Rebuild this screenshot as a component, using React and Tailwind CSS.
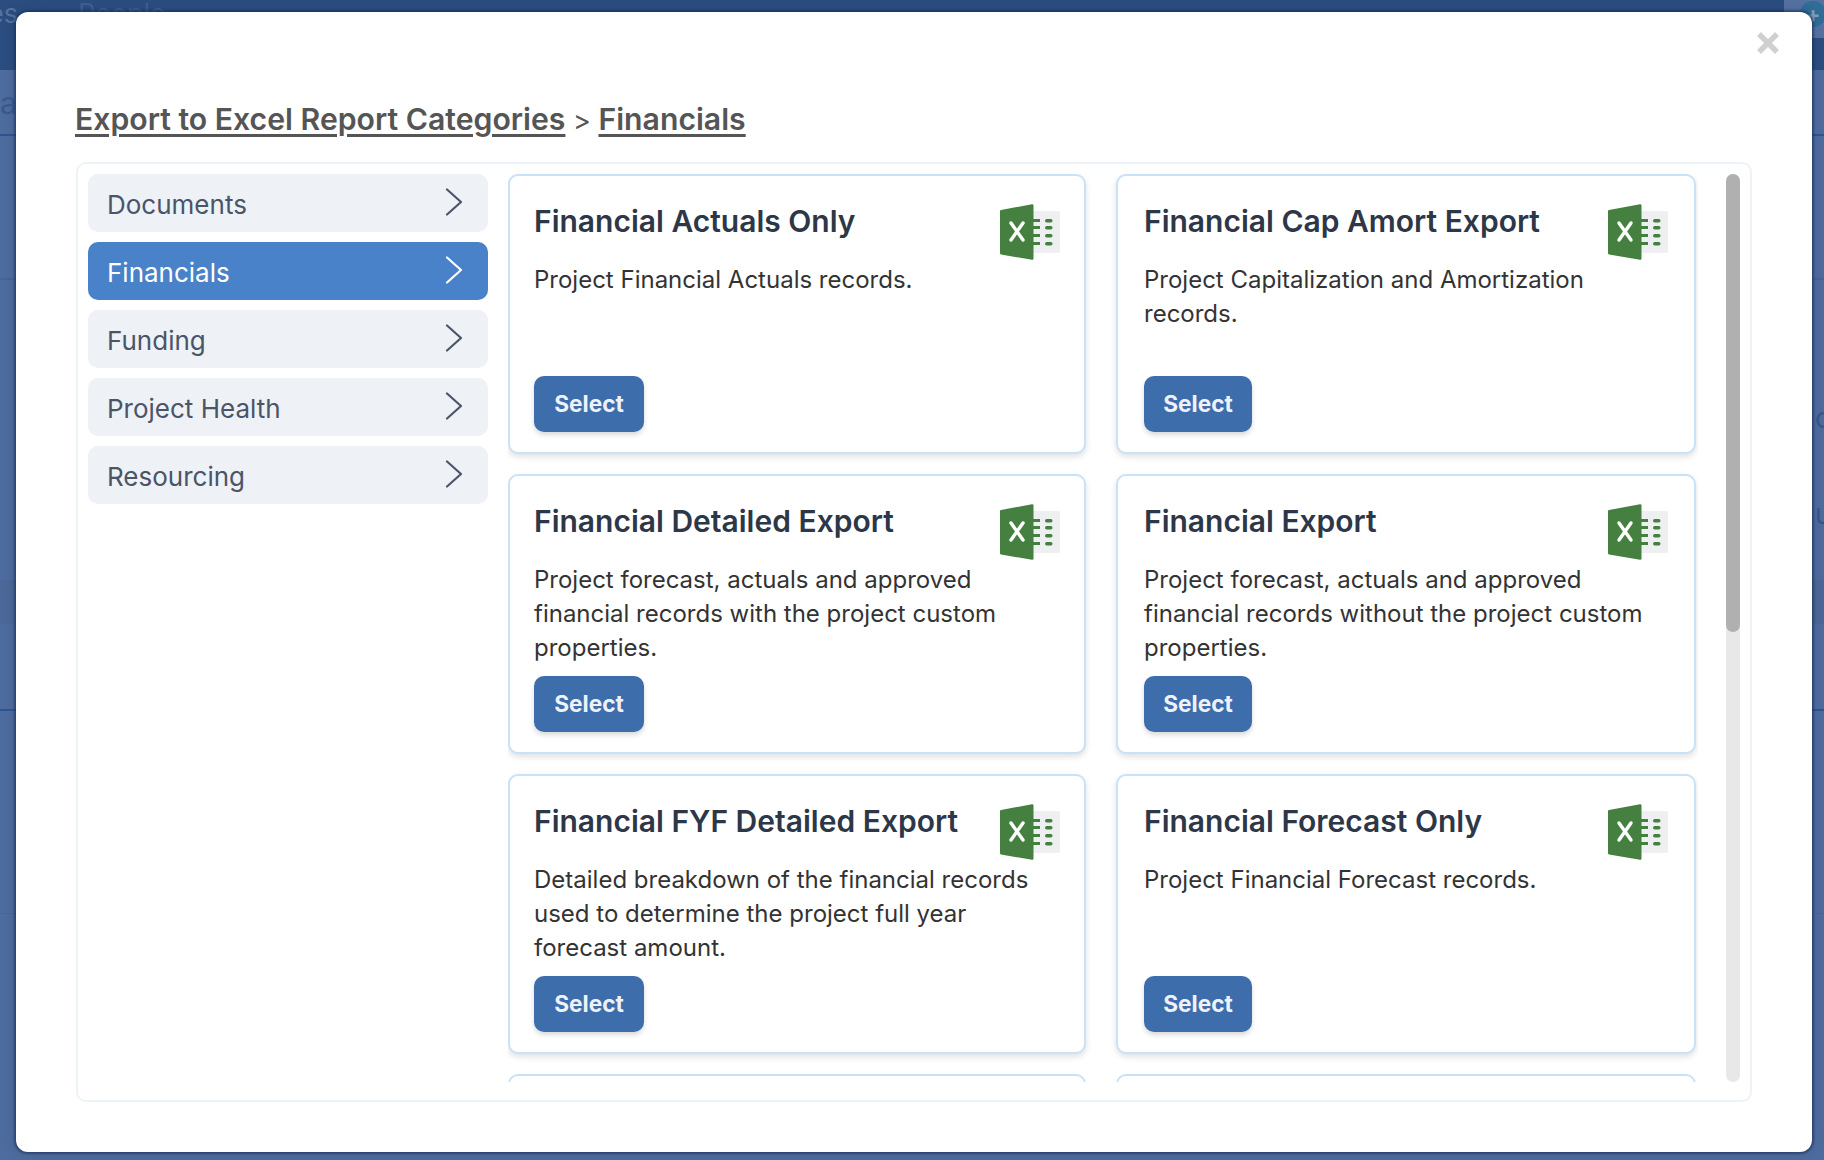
const navItems = ["Documents", "Financials", "Funding", "Project Health", "Resourcing"];

const cards = [
  { title: "Financial Actuals Only", lines: ["Project Financial Actuals records."] },
  { title: "Financial Cap Amort Export", lines: ["Project Capitalization and Amortization", "records."] },
  { title: "Financial Detailed Export", lines: ["Project forecast, actuals and approved", "financial records with the project custom", "properties."] },
  { title: "Financial Export", lines: ["Project forecast, actuals and approved", "financial records without the project custom", "properties."] },
  { title: "Financial FYF Detailed Export", lines: ["Detailed breakdown of the financial records", "used to determine the project full year", "forecast amount."] },
  { title: "Financial Forecast Only", lines: ["Project Financial Forecast records."] },
];

function ExcelIcon() {
  return (
    <svg width="60" height="56" viewBox="0 0 60 56" className="shrink-0">
      <rect x="30" y="7" width="30" height="42" rx="2" fill="#eeeff0" />
      <g fill="#458040">
        <rect x="33" y="15" width="7" height="3" />
        <rect x="33" y="22" width="7" height="3" />
        <rect x="33" y="30" width="7" height="3" />
        <rect x="33" y="38" width="7" height="3" />
        <rect x="45" y="15" width="7.5" height="3.4" rx="1.7" />
        <rect x="45" y="22" width="7.5" height="3.4" rx="1.7" />
        <rect x="45" y="30" width="7.5" height="3.4" rx="1.7" />
        <rect x="45" y="38" width="7.5" height="3.4" rx="1.7" />
      </g>
      <path d="M1 6 L32 0.2 Q33.5 0 33.5 1.5 L33.5 54.5 Q33.5 56 32 55.8 L1 50.5 Q0 50.3 0 49.3 L0 7 Q0 6.2 1 6 Z" fill="#458040" />
      <path d="M11 19 L23 36 M23 19 L11 36" stroke="#ffffff" strokeWidth="3.4" strokeLinecap="round" />
    </svg>
  );
}

function Chevron({ className }) {
  return (
    <svg width="18" height="28" viewBox="0 0 18 28" fill="none" className={className}>
      <path d="M2 1.5 L16 14 L2 26.5" stroke="currentColor" strokeWidth="2.2" strokeLinecap="round" strokeLinejoin="round" />
    </svg>
  );
}

function Card({ title, lines, right }) {
  return (
    <div
      className={
        right
          ? "h-[280px] rounded-[10px] border-2 border-[#c8e2f8] bg-white pl-[26px] pr-[26px] pt-[26px] pb-[20px] shadow-[0_3px_6px_rgba(0,0,0,0.12)] flex flex-col"
          : "h-[280px] rounded-[10px] border-2 border-[#c8e2f8] bg-white pl-[24px] pr-[24px] pt-[26px] pb-[20px] shadow-[0_3px_6px_rgba(0,0,0,0.12)] flex flex-col"
      }
    >
      <div className="flex justify-between items-start">
        <div className="min-w-0">
          <div className="text-[30px] leading-[38px] font-semibold text-[#2d3748] whitespace-nowrap">{title}</div>
          <div className="mt-[23px] text-[24px] leading-[34px] text-[#333333]">
            {lines.map((l) => (
              <div key={l} className="whitespace-nowrap">{l}</div>
            ))}
          </div>
        </div>
        <div className="pt-[2px]">
          <ExcelIcon />
        </div>
      </div>
      <button
        className={
          right
            ? "mt-auto w-[108px] h-[56px] rounded-[10px] bg-[#3d6dab] text-[#eef2f8] text-[22.7px] font-bold shadow-[0_3px_5px_rgba(0,0,0,0.15)]"
            : "mt-auto w-[110px] h-[56px] rounded-[10px] bg-[#3d6dab] text-[#eef2f8] text-[22.7px] font-bold shadow-[0_3px_5px_rgba(0,0,0,0.15)]"
        }
      >
        Select
      </button>
    </div>
  );
}

export default function App() {
  return (
    <div className="relative w-[1824px] h-[1160px] overflow-hidden bg-[#4f6c9f] font-['Inter',sans-serif]">
      {/* dimmed page behind the modal */}
      <div className="h-[70px] bg-[#2b4d80] flex text-[27px] leading-[26px]">
        <span className="w-[78px] -ml-[18px] pt-[1px] text-[#54739f] text-right pr-[42px]">es</span>
        <span className="pl-[18px] pt-[1px] text-[#3f5f90]">People</span>
      </div>
      <div className="h-[66px] border-b-2 border-[#2f5590] text-[#3a5a8e] text-[30px] leading-[66px]">a</div>
      <div className="h-[144px] border-b-2 border-[#466595]"></div>
      <div className="h-[301px] border-b border-[#4a6799] pl-[1815px] pt-[122px] text-[#37578a] text-[28px] leading-[32px]">
        <div>c</div>
        <div className="mt-[64px]">u</div>
      </div>
      <div className="h-[43px] bg-[#4b6898]"></div>
      <div className="h-[87px] border-b-2 border-[#2f5590]"></div>
      <div className="h-[203px] border-b border-[#4a6799]"></div>

      {/* top-right control behind the modal */}
      <div className="absolute right-0 top-0 w-[40px] h-[38px] bg-[#5572a3]">
        <div className="absolute left-[16px] top-[1px] w-[26px] h-[26px] rounded-full bg-[#2f6e96] flex items-center justify-center text-[#7f9fc0] text-[22px] font-bold">+</div>
      </div>

      {/* modal */}
      <div className="absolute left-[16px] top-[12px] w-[1796px] h-[1140px] rounded-[12px] bg-white shadow-[0_0_2px_2px_rgba(25,45,85,0.55),0_0_16px_rgba(25,45,85,0.2)] pt-[87px] pl-[59px] pr-[60px]">
        <svg width="22" height="22" viewBox="0 0 22 22" className="absolute right-[33px] top-[20px]">
          <path d="M2 2 L20 20 M20 2 L2 20" stroke="#d0d0d0" strokeWidth="5.5" />
        </svg>
        <h1 className="h-[43px] text-[30.2px] leading-[40px] font-semibold text-[#555555] whitespace-nowrap">
          <span className="underline underline-offset-[4px]">Export to Excel Report Categories</span>
          <span className="font-normal text-[27px]"> &gt; </span>
          <span className="underline underline-offset-[4px]">Financials</span>
        </h1>
        <div className="ml-[1px] mt-[20px] h-[940px] w-[1676px] rounded-[10px] border-2 border-[#edf3f9] p-[10px] flex">
          <nav className="w-[400px] shrink-0 flex flex-col gap-[10px]">
            {navItems.map((item) => {
              const active = item === "Financials";
              return (
                <div
                  key={item}
                  className={
                    active
                      ? "h-[58px] rounded-[10px] bg-[#4a82c9] text-white flex items-center justify-between pl-[19px] pr-[25px] text-[26px]"
                      : "h-[58px] rounded-[10px] bg-[#eef1f6] text-[#4a5568] flex items-center justify-between pl-[19px] pr-[25px] text-[26px]"
                  }
                >
                  <span className="mt-[3px]">{item}</span>
                  <Chevron className="-mt-[2px]" />
                </div>
              );
            })}
          </nav>
          <div className="ml-[20px] h-[908px] w-[1190px] overflow-hidden">
            <div className="grid grid-cols-[578px_580px] gap-x-[30px] gap-y-[20px]">
              {cards.map((c, i) => (
                <Card key={c.title} title={c.title} lines={c.lines} right={i % 2 === 1} />
              ))}
              <div className="h-[280px] rounded-[10px] border-2 border-[#c8e2f8]"></div>
              <div className="h-[280px] rounded-[10px] border-2 border-[#c8e2f8]"></div>
            </div>
          </div>
          <div className="ml-[28px] w-[14px] h-[908px] rounded-[7px] bg-[#e8e8e8]">
            <div className="h-[458px] rounded-[7px] bg-[#b0b0b0]"></div>
          </div>
        </div>
      </div>
    </div>
  );
}
